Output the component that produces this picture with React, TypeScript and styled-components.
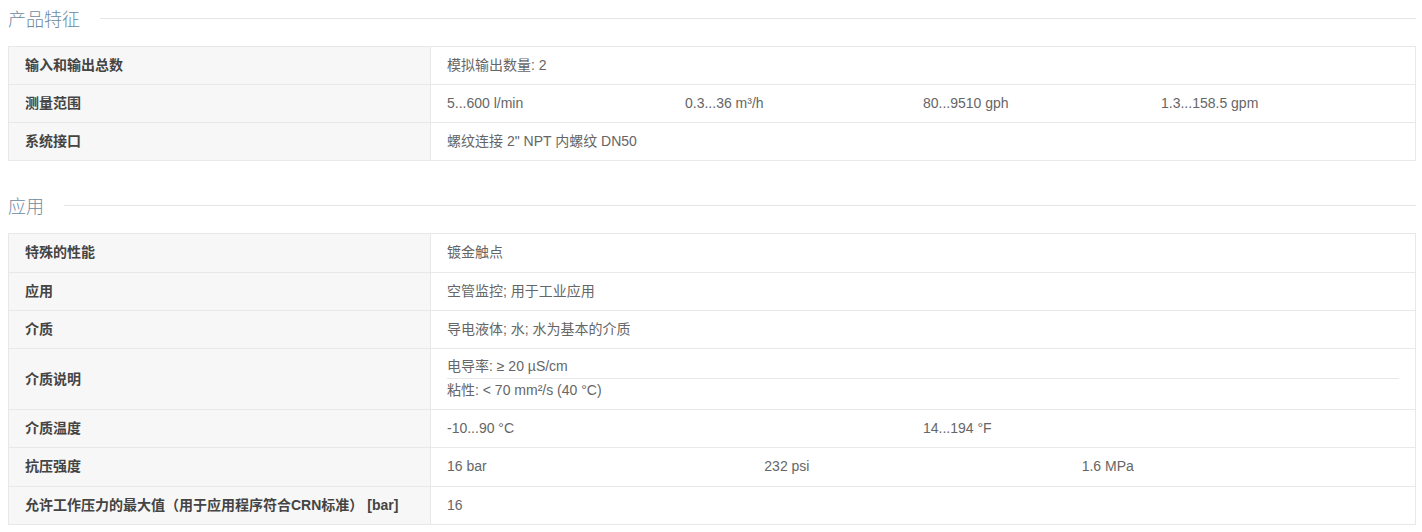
import React from "react";
import styled, { createGlobalStyle } from "styled-components";

const Global = createGlobalStyle`
  html, body { margin: 0; padding: 0; background: #fff; }
  body { font-family: "Liberation Sans", Arial, "Noto Sans CJK SC", sans-serif; }
`;

const Page = styled.div`
  padding: 0 6px 0 8px;
`;

const Section = styled.section`
  margin-bottom: 26px;
`;

const Heading = styled.div`
  display: flex;
  align-items: center;
  gap: 20px;
  height: 36px;
  margin-bottom: 10px;
  font-size: 18px;
  color: #6d8aa1;
  font-family: "Noto Sans CJK SC", "Liberation Sans", sans-serif;
  font-weight: 300;
  &::after {
    content: "";
    flex: 1;
    height: 1px;
    background: #e6e6e6;
  }
`;

const Table = styled.div`
  border: 1px solid #e8e8e8;
  border-bottom: none;
`;

const Row = styled.div`
  display: grid;
  grid-template-columns: 422px 1fr;
  border-bottom: 1px solid #e8e8e8;
  font-size: 14px;
  line-height: 21.15px;
`;

const Label = styled.div`
  background: #f7f7f7;
  border-right: 1px solid #e8e8e8;
  padding: 8px 16px;
  display: flex;
  align-items: center;
  font-weight: bold;
  color: #444;
  font-family: "Liberation Sans", Arial, "Noto Sans CJK SC", sans-serif;
`;

const Value = styled.div<{ $cols: number }>`
  padding: 8px 16px;
  display: grid;
  grid-template-columns: repeat(${(p) => p.$cols}, 1fr);
  color: #666;
`;

const Stack = styled.div`
  padding: 7px 16px 8px;
  display: flex;
  flex-direction: column;
  color: #666;
`;

const StackLine = styled.div`
  & + & {
    border-top: 1px solid #e8e8e8;
    padding-top: 1px;
  }
  &:first-child {
    padding-bottom: 1px;
  }
`;

type RowData = { label: string; values: string[]; stacked?: boolean };

const features: RowData[] = [
  { label: "输入和输出总数", values: ["模拟输出数量: 2"] },
  { label: "测量范围", values: ["5...600 l/min", "0.3...36 m³/h", "80...9510 gph", "1.3...158.5 gpm"] },
  { label: "系统接口", values: ["螺纹连接 2\" NPT 内螺纹 DN50"] },
];

const application: RowData[] = [
  { label: "特殊的性能", values: ["镀金触点"] },
  { label: "应用", values: ["空管监控; 用于工业应用"] },
  { label: "介质", values: ["导电液体; 水; 水为基本的介质"] },
  { label: "介质说明", values: ["电导率: ≥ 20 µS/cm", "粘性: < 70 mm²/s (40 °C)"], stacked: true },
  { label: "介质温度", values: ["-10...90 °C", "14...194 °F"] },
  { label: "抗压强度", values: ["16 bar", "232 psi", "1.6 MPa"] },
  { label: "允许工作压力的最大值（用于应用程序符合CRN标准） [bar]", values: ["16"] },
];

const SpecTable = ({ rows }: { rows: RowData[] }) => (
  <Table>
    {rows.map((r) => (
      <Row key={r.label}>
        <Label>{r.label}</Label>
        {r.stacked ? (
          <Stack>
            {r.values.map((v) => (
              <StackLine key={v}>{v}</StackLine>
            ))}
          </Stack>
        ) : (
          <Value $cols={r.values.length}>
            {r.values.map((v) => (
              <span key={v}>{v}</span>
            ))}
          </Value>
        )}
      </Row>
    ))}
  </Table>
);

export default function App() {
  return (
    <Page>
      <Global />
      <Section>
        <Heading>产品特征</Heading>
        <SpecTable rows={features} />
      </Section>
      <Section>
        <Heading>应用</Heading>
        <SpecTable rows={application} />
      </Section>
    </Page>
  );
}
